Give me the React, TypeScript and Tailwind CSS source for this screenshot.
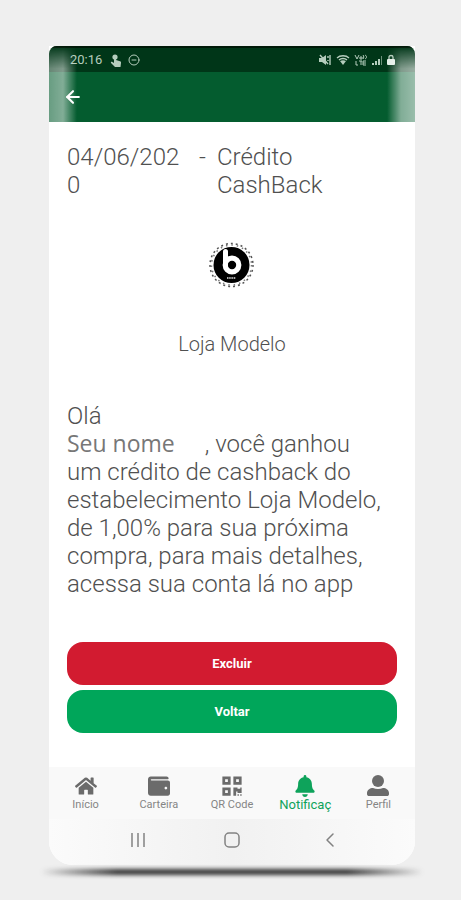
import { ArrowLeft, ChevronLeft, CircleMinus } from "lucide-react";
import { FaBell, FaHome, FaQrcode, FaWallet } from "react-icons/fa";

const PersonIcon = ({ size = 22 }: { size?: number }) => (
  <svg width={size} height={size} viewBox="0 0 22 22" fill="currentColor">
    <circle cx="11" cy="6" r="6" />
    <path d="M0 19v-1c0-3 3-5 6-5 3 1.3 7 1.3 10 0 3 0 6 2 6 5v1c0 1.5-1 2-2 2H2c-1 0-2-.5-2-2z" />
  </svg>
);

const tabs = [
  { label: "Início", icon: FaHome },
  { label: "Carteira", icon: FaWallet },
  { label: "QR Code", icon: FaQrcode },
  { label: "Notificaç", icon: FaBell, active: true },
  { label: "Perfil", icon: PersonIcon },
];

const TouchIcon = () => (
  <svg width="12" height="13" viewBox="0 0 12 13" fill="currentColor">
    <circle cx="5" cy="3" r="2.6" />
    <path d="M4 3c0-1.3 2-1.3 2 0v3l4 1.2c1 .3 1.2 1 1 1.8L10.5 13H5L1 9c-.5-.8.3-1.5 1-1.2L4 9z" />
  </svg>
);

const MutedIcon = () => (
  <svg width="13" height="12" viewBox="0 0 13 12" fill="currentColor">
    <path d="M0 4h3l4-3v10L3 8H0z" />
    <path d="M1 1l8 9M9 2v2M9 6v1M11 1v10" fill="none" stroke="currentColor" strokeWidth="1.4" />
  </svg>
);

const WifiIcon = () => (
  <svg width="14" height="12" viewBox="0 0 14 12" fill="none" stroke="currentColor" strokeWidth="1.3">
    <path d="M1 4c3-3 9-3 12 0M3 6c2-2 6-2 8 0" />
    <path d="M4 7c2-1 4-1 6 0l-3 4z" fill="currentColor" stroke="none" />
  </svg>
);

const VolteIcon = () => (
  <svg width="14" height="12" viewBox="0 0 14 12" fill="none" stroke="currentColor" strokeWidth="1">
    <path d="M1 1l2 4 2-4M6 3h2v2H6zM9 1c1 1 1 3 0 4M11 1c2 1 2 3 0 4M2 7v4h2M5 7h3M7 7v4M12 7H9v4h3M9 9h3" />
  </svg>
);

const SignalIcon = () => (
  <svg width="11" height="12" viewBox="0 0 11 12" fill="currentColor">
    <path d="M0 9h2v2H0zM3 7h2v4H3zM6 5h2v6H6z" />
    <path d="M9 2h1v9H9z" opacity="0.6" />
  </svg>
);

const LockIcon = () => (
  <svg width="8" height="12" viewBox="0 0 8 12">
    <path d="M2 6V3c0-2 4-2 4 0v3" fill="none" stroke="currentColor" strokeWidth="1.3" />
    <rect y="5" width="8" height="6" rx="1" fill="#e4eee7" />
  </svg>
);

const StatusBar = () => (
  <div className="flex h-[26px] items-center border-t-2 border-[#001a08] bg-[#003618] pl-[21px] pr-5 text-[#b5cdbd]">
    <span className="mr-2 text-[13px] leading-4">20:16</span>
    <TouchIcon />
    <CircleMinus size={12} className="ml-1.5" />
    <div className="ml-auto flex items-center gap-1">
      <MutedIcon />
      <WifiIcon />
      <VolteIcon />
      <SignalIcon />
      <LockIcon />
    </div>
  </div>
);

const StoreLogo = () => (
  <svg viewBox="0 0 48 48" className="h-12 w-12" role="img" aria-label="Loja Modelo">
    <circle cx="23.5" cy="24" r="21.5" fill="none" stroke="#555" strokeWidth="1.5" strokeDasharray="2 3" />
    <circle cx="23.5" cy="24" r="20" fill="none" stroke="#777" strokeWidth="1.5" strokeDasharray="1.5 4" />
    <circle cx="23.5" cy="24" r="18" fill="#000" />
    <path d="M17.5 10.5V24" stroke="#fff" strokeWidth="5" strokeLinecap="round" />
    <circle cx="24" cy="24" r="6.8" fill="none" stroke="#fff" strokeWidth="5.2" />
    <path d="M19 37h9" stroke="#aaa" strokeWidth="2" strokeDasharray="1.5 0.7" />
  </svg>
);

const TabBar = () => (
  <nav className="flex h-[52px] bg-[#f9f9f9]">
    {tabs.map((tab) => {
      const Icon = tab.icon;

      return (
        <a
          key={tab.label}
          href="#"
          className={`flex flex-1 basis-0 flex-col items-center pt-2 ${tab.active ? "text-[#0ea35b]" : "text-[#6b6b6b]"}`}
        >
          <Icon size={22} />
          <span className={tab.active ? "text-[13px] leading-4" : "text-[11px] leading-4 text-[#858585]"}>
            {tab.label}
          </span>
        </a>
      );
    })}
  </nav>
);

const SystemNav = () => (
  <div className="flex h-[46px] items-center justify-between rounded-b-3xl bg-linear-to-r from-[#fbfbfb] via-[#f1f1f1] to-[#fbfbfb] pb-1 pl-[81px] pr-[73px] text-[#828282]">
    <button aria-label="Recentes">
      <svg width="16" height="16" viewBox="0 0 16 16" stroke="currentColor" strokeWidth="1.5">
        <path d="M2 1v14M8 1v14M14 1v14" />
      </svg>
    </button>
    <button aria-label="Tela inicial">
      <svg width="16" height="16" viewBox="0 0 16 16" fill="none" stroke="currentColor" strokeWidth="1.5">
        <rect x="1" y="1" width="14" height="14" rx="4" />
      </svg>
    </button>
    <button aria-label="Voltar à tela anterior">
      <ChevronLeft size={24} strokeWidth={1.5} />
    </button>
  </div>
);

export default function App() {
  return (
    <div className="min-h-screen bg-[#efefef] pl-[49px] pr-[46px] pt-[46px] font-['Roboto',sans-serif] text-[#505050]">
      <div className="rounded-b-3xl bg-white">
        <header className="relative overflow-hidden rounded-t-lg">
          <StatusBar />
          <div className="flex h-[50px] items-center bg-[#045c2f] pl-[14px] text-white">
            <button aria-label="Voltar">
              <ArrowLeft size={20} strokeWidth={2.5} />
            </button>
          </div>
          {/* glass reflections on both edges */}
          <div className="pointer-events-none absolute bottom-0 left-0 top-0 w-7 bg-linear-to-r from-white/40 via-white/50 to-transparent mask-t-from-70%" />
          <div className="pointer-events-none absolute bottom-0 right-0 top-0 w-7 bg-linear-to-l from-white/60 via-white/50 to-transparent mask-t-from-70%" />
        </header>

        <main className="px-[18px] pb-[34px] pt-[21px]">
          <div className="flex text-2xl font-light leading-7">
            <p className="w-[40%] break-all pr-3">04/06/2020</p>
            <p className="w-[18px]">-</p>
            <p className="flex-1">
              Crédito
              <br />
              CashBack
            </p>
          </div>

          <div className="flex flex-col items-center pt-[42px]">
            <StoreLogo />
            <h1 className="mt-[41px] text-xl font-light leading-7">Loja Modelo</h1>
          </div>

          <p className="mt-11 text-2xl font-light leading-7">
            Olá
            <br />
            <span className="mr-[30px] font-['Open_Sans',sans-serif] text-[23px] font-normal leading-5 text-[#777]">
              Seu nome
            </span>
            , você ganhou
            <br />
            um crédito de cashback do estabelecimento Loja Modelo, de 1,00% para sua próxima compra, para mais
            detalhes, acessa sua conta lá no app
          </p>

          <div className="mt-11 flex flex-col gap-[5px] text-[13px] font-bold text-white">
            <button className="h-[43px] rounded-2xl bg-[#d21b30]">Excluir</button>
            <button className="h-[43px] rounded-2xl bg-[#00a65a]">Voltar</button>
          </div>
        </main>

        <TabBar />
        <SystemNav />
      </div>
      {/* shadow cast by the phone */}
      <div className="-mx-2 mt-1 flex h-[6px] blur-[2px]">
        <div className="w-1/5 bg-linear-to-r from-transparent to-[#333]" />
        <div className="flex-1 bg-[#333]" />
        <div className="w-1/5 bg-linear-to-l from-transparent to-[#333]" />
      </div>
    </div>
  );
}
